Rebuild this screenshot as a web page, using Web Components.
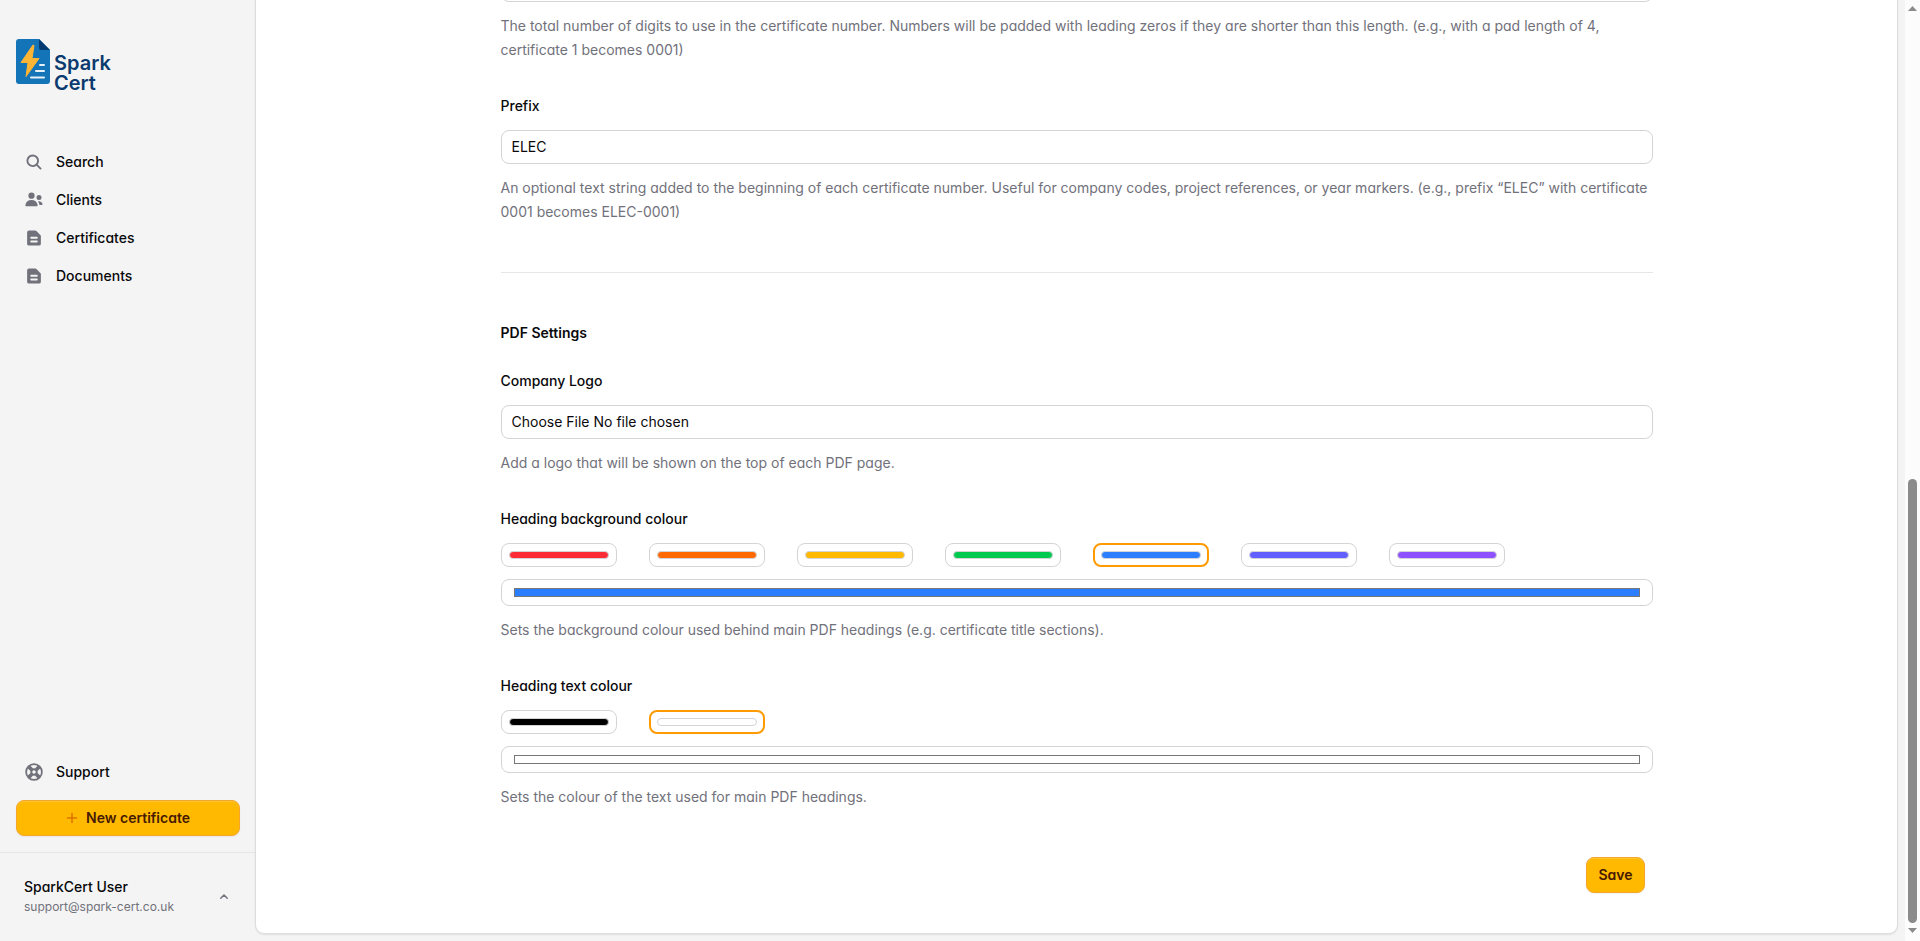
<!DOCTYPE html>
<html lang="en-GB">
<head>
<meta charset="utf-8">
<title>SparkCert – Settings</title>
<style>
  html, body { margin: 0; height: 100%; background: #f4f4f4; }
  body {
    font: 400 14px/24px Inter, "Liberation Sans", sans-serif;
    font-feature-settings: "cv11";
    color: #09090b;
  }
</style>
</head>
<body>
<spark-app>
  <spark-sidebar slot="sidebar">
    <nav-item icon="search" slot="nav">Search</nav-item>
    <nav-item icon="users" slot="nav">Clients</nav-item>
    <nav-item icon="document" slot="nav">Certificates</nav-item>
    <nav-item icon="document" slot="nav">Documents</nav-item>
    <nav-item icon="support" slot="foot">Support</nav-item>
    <spark-button icon slot="foot">New certificate</spark-button>
    <user-card slot="user" name="SparkCert User" email="support@spark-cert.co.uk"></user-card>
  </spark-sidebar>
  <settings-form>
    <form-section>
      <text-field label="Pad length" bare>The total number of digits to use in the certificate number. Numbers will be padded with leading zeros if they are shorter than this length. (e.g., with a pad length of 4, certificate 1 becomes 0001)</text-field>
      <text-field label="Prefix" value="ELEC">An optional text string added to the beginning of each certificate number. Useful for company codes, project references, or year markers. (e.g., prefix “ELEC” with certificate 0001 becomes ELEC-0001)</text-field>
    </form-section>
    <form-section heading="PDF Settings">
      <text-field label="Company Logo" type="file">Add a logo that will be shown on the top of each PDF page.</text-field>
      <colour-field label="Heading background colour" value="#2b7fff" options="#fb2c36 #ff6900 #ffb900 #00c950 #2b7fff #615fff #8e51ff">Sets the background colour used behind main PDF headings (e.g. certificate title sections).</colour-field>
      <colour-field label="Heading text colour" value="#ffffff" options="#000000 #ffffff">Sets the colour of the text used for main PDF headings.</colour-field>
    </form-section>
    <spark-button slot="actions">Save</spark-button>
  </settings-form>
  <scroll-rail slot="rail"></scroll-rail>
</spark-app>

<script>
const define = (name, render) => customElements.define(name, class extends HTMLElement {
  connectedCallback() {
    if (this.shadowRoot) return;
    this.attachShadow({ mode: 'open' }).innerHTML = render(this);
  }
});

define('spark-app', () => `
  <style>
    :host { display: grid; grid-template-columns: 256px minmax(0, 1fr) 15px; height: 100vh; overflow: hidden; }
    main {
      display: flex; flex-direction: column; justify-content: flex-end;
      min-height: 0; overflow: hidden; padding: 0 8px 8px 0; margin-left: -4px; padding-left: 4px;
    }
    .panel {
      flex: 1 0 auto; display: flex; flex-direction: column; justify-content: flex-end;
      background: #fff; border-radius: 0 0 8px 8px;
      box-shadow: 0 0 0 1px #dddddf, 0 1px 2px 1px #00000014;
    }
  </style>
  <slot name="sidebar"></slot>
  <main><div class="panel"><slot></slot></div></main>
  <slot name="rail"></slot>`);

define('spark-logo', () => `
  <style>
    :host { display: flex; color: #0b3a6f; }
    svg { display: block; }
    .mark { margin-right: 4px; }
    .word { display: block; padding-top: 14px; }
    .word span { display: block; font: 600 20px/20px Inter, sans-serif; font-feature-settings: normal; }
  </style>
  <svg class="mark" width="34" height="45" viewBox="0 0 34 45" aria-hidden="true">
    <path d="M3 0H23L34 11V42a3 3 0 0 1-3 3H3a3 3 0 0 1-3-3V3a3 3 0 0 1 3-3z" fill="#1375b8"/>
    <path d="M23 0L34 11H25a2 2 0 0 1-2-2z" fill="#043a72"/>
    <g stroke="#e6f0f7" stroke-width="2" stroke-linecap="round"><path d="M24 26h4M20 32h8M15 38.500h13"/></g>
    <path d="M17 6L5 23.500h7L10 37.500L23 19.500h-7L18 6.500z" fill="#ffb534" stroke="#ffb534" stroke-linejoin="round"/>
  </svg>
  <span class="word"><span>Spark</span><span>Cert</span></span>`);

const icons = {
  search: '<path fill-rule="evenodd" clip-rule="evenodd" d="M9.965 11.026a5 5 0 1 1 1.060-1.060l2.755 2.754a.75.75 0 1 1-1.060 1.060l-2.755-2.754ZM10.500 7a3.500 3.500 0 1 1-7 0 3.500 3.500 0 0 1 7 0Z"/>',
  users: '<path d="M8.500 4.500a2.500 2.500 0 1 1-5 0 2.500 2.500 0 0 1 5 0ZM10.900 12.006c.110.542-.348.994-.900.994H2c-.553 0-1.010-.452-.902-.994a5.002 5.002 0 0 1 9.803 0ZM14.002 12h-1.590a2.556 2.556 0 0 0-.040-.290 6.476 6.476 0 0 0-1.167-2.603 3.002 3.002 0 0 1 3.633 1.911c.180.522-.283.982-.836.982ZM12 8a2 2 0 1 0 0-4 2 2 0 0 0 0 4Z"/>',
  document: '<path fill-rule="evenodd" clip-rule="evenodd" d="M4 2a1.500 1.500 0 0 0-1.500 1.500v9A1.500 1.500 0 0 0 4 14h8a1.500 1.500 0 0 0 1.500-1.500V6.621a1.500 1.500 0 0 0-.440-1.060L9.940 2.439A1.500 1.500 0 0 0 8.878 2H4Zm1 5.750A.75.75 0 0 1 5.750 7h4.500a.75.75 0 0 1 0 1.500h-4.500A.75.75 0 0 1 5 7.750Zm0 3a.75.75 0 0 1 .75-.75h4.500a.75.75 0 0 1 0 1.500h-4.500a.75.75 0 0 1-.75-.75Z"/>',
  support: '<g fill="none" stroke="#71717b"><circle cx="8" cy="8" r="6.300" stroke-width="1.400"/><circle cx="8" cy="8" r="2.200" stroke-width="1.500"/><path stroke-width="3" d="M9.800 9.800l2.500 2.500M6.200 6.200L3.700 3.700M9.800 6.200l2.500-2.500M6.200 9.800l-2.500 2.500"/></g>'
};

define('nav-item', el => `
  <style>
    :host { display: block; }
    a { display: flex; align-items: center; gap: 12px; height: 36px; padding: 0 8px; border-radius: 8px; color: #09090b; font-weight: 500; text-decoration: none; }
    a:hover { background: #09090b0d; }
    svg { width: 20px; height: 20px; fill: #71717b; }
  </style>
  <a href="#"><svg viewBox="0 0 16 16" aria-hidden="true">${icons[el.getAttribute('icon')]}</svg><slot></slot></a>`);

define('spark-button', el => `
  <style>
    :host { display: block; }
    button {
      display: flex; align-items: center; justify-content: center; gap: 6px;
      box-sizing: border-box; width: 100%; height: 36px; padding: 0 11px;
      border: 1px solid #f5a52a; border-radius: 8px; background: #ffb900; color: #461901;
      font: inherit; font-weight: 600; font-feature-settings: inherit;
      box-shadow: inset 0 1px #ffc633, 0 1px 2px #0000000d;
    }
    svg { width: 16px; height: 16px; margin-left: -2px; stroke: #e17100; }
  </style>
  <button type="button">${el.hasAttribute('icon') ? '<svg viewBox="0 0 16 16" fill="none" stroke-width="1.500" stroke-linecap="round" aria-hidden="true"><path d="M8 3.500v9M3.500 8h9"/></svg>' : ''}<slot></slot></button>`);

define('user-card', el => `
  <style>
    :host { display: block; }
    button { display: flex; align-items: center; justify-content: space-between; width: 100%; padding: 8px; border: 0; background: none; color: inherit; font: inherit; font-feature-settings: inherit; text-align: left; }
    .name, .email { display: block; line-height: 20px; }
    .name { font-weight: 500; }
    .email { font-size: 12px; color: #71717b; }
    svg { width: 16px; height: 16px; }
  </style>
  <button type="button" aria-haspopup="menu">
    <span><span class="name">${el.getAttribute('name')}</span><span class="email">${el.getAttribute('email')}</span></span>
    <svg viewBox="0 0 16 16" fill="none" stroke="#71717b" stroke-width="1.500" stroke-linecap="round" stroke-linejoin="round" aria-hidden="true"><path d="M4.750 9.250L8 6l3.250 3.250"/></svg>
  </button>`);

define('spark-sidebar', () => `
  <style>
    :host { display: flex; flex-direction: column; min-height: 0; }
    header { padding: 39px 16px 51px; }
    nav { display: flex; flex-direction: column; gap: 2px; padding: 0 16px; }
    .foot { display: flex; flex-direction: column; gap: 10px; margin-top: auto; padding: 0 16px 16px; }
    footer { padding: 16px; border-top: 1px solid #e6e6e7; }
  </style>
  <header><spark-logo></spark-logo></header>
  <nav><slot name="nav"></slot></nav>
  <div class="foot"><slot name="foot"></slot></div>
  <footer><slot name="user"></slot></footer>`);

define('settings-form', () => `
  <style>
    :host { display: block; box-sizing: border-box; width: 100%; max-width: 1152px; margin: 0 auto; padding-bottom: 40px; }
    .actions { display: flex; justify-content: flex-end; padding: 48px 8px 0 0; }
  </style>
  <slot></slot>
  <div class="actions"><slot name="actions"></slot></div>`);

define('form-section', el => `
  <style>
    :host { display: flex; flex-direction: column; gap: 32px; }
    :host(:not(:first-of-type)) { margin-top: 48px; padding-top: 48px; border-top: 1px solid #e6e6e7; }
    h2 { margin: 0 0 -8px; font-size: 14px; line-height: 24px; font-weight: 600; }
  </style>
  ${el.getAttribute('heading') ? `<h2>${el.getAttribute('heading')}</h2>` : ''}<slot></slot>`);

const fieldStyles = `
  :host { display: flex; flex-direction: column; gap: 12px; }
  label { font-weight: 500; }
  p { margin: 0; color: #71717b; }
  input { box-sizing: border-box; width: 100%; margin: 0; border: 1px solid #d4d4d8; border-radius: 8px; background: #fff; color: #09090b; font: inherit; font-feature-settings: inherit; }`;

define('text-field', el => {
  const label = el.getAttribute('label');
  const bare = el.hasAttribute('bare');
  return `
  <style>${fieldStyles}
    input { height: 34px; padding: 0 10px 2px; }
    input[type=file] { padding: 4px 10px; }
    ::file-selector-button { margin: 0 4px 0 0; padding: 0; border: 0; background: none; color: inherit; font: inherit; }
  </style>
  ${bare ? '' : `<label for="field">${label}</label>`}
  <input id="field" type="${el.getAttribute('type') || 'text'}" value="${el.getAttribute('value') || ''}"${bare ? ` aria-label="${label}"` : ''}>
  <p><slot></slot></p>`;
});

define('colour-field', el => {
  const value = el.getAttribute('value');
  return `
  <style>${fieldStyles}
    .options { display: grid; grid-template-columns: repeat(8, minmax(0, 1fr)); gap: 32px; }
    .options button { box-sizing: border-box; height: 24px; padding: 7px; border: 1px solid #d4d4d8; border-radius: 8px; background: #fff; }
    .options button[aria-pressed=true] { border: 2px solid #ff9a00; padding: 6px; }
    .options span { display: block; box-sizing: border-box; height: 8px; border: 1px solid #d4d4d8; border-radius: 4px; }
    input { display: block; height: 27px; padding: 8px 12px; }
    ::-webkit-color-swatch-wrapper { padding: 0; }
    ::-webkit-color-swatch { border: 1px solid #777; }
  </style>
  <label for="colour">${el.getAttribute('label')}</label>
  <div class="options">${el.getAttribute('options').split(' ').map(c =>
    `<button type="button" aria-label="${c}" aria-pressed="${c === value}"><span style="background:${c}"></span></button>`).join('')}</div>
  <input id="colour" type="color" value="${value}">
  <p><slot></slot></p>`;
});

define('scroll-rail', () => `
  <style>
    :host { display: flex; flex-direction: column; align-items: center; background: #fcfcfc; padding: 5px 0 7px; box-sizing: border-box; min-height: 0; }
    svg { flex: none; fill: #8b8b8b; }
    .track { flex: 1; width: 9px; margin: 5px 0; display: flex; flex-direction: column; justify-content: flex-end; }
    .thumb { height: 49%; border-radius: 5px; background: #8b8b8b; }
  </style>
  <svg width="9" height="6" viewBox="0 0 9 6" aria-hidden="true"><path d="M4.500 1L9 6H0z"/></svg>
  <div class="track"><div class="thumb"></div></div>
  <svg width="9" height="6" viewBox="0 0 9 6" aria-hidden="true"><path d="M0 0h9L4.500 5z"/></svg>`);
</script>
</body>
</html>
